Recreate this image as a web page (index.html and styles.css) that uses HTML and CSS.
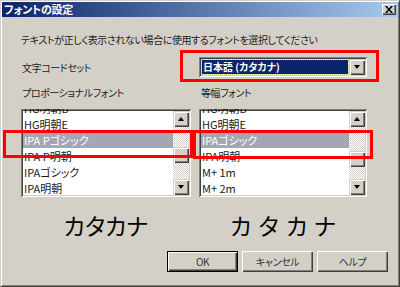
FILE: index.html
```html
<!DOCTYPE html>
<html lang="ja">

<head>
    <meta charset="UTF-8">
    <title>フォントの設定</title>
    <link rel="stylesheet" href="styles.css">
</head>

<body>
    <div class="window">
        <div class="titlebar">
            <span class="title">フォントの設定</span>
            <span class="close">
                <svg width="8" height="7" viewBox="0 0 8 7">
                    <path d="M0 0h2l2 2.5L6 0h2L5 3.5 8 7H6L4 4.5 2 7H0l3-3.5z" fill="#000" />
                </svg>
            </span>
        </div>

        <div class="content">
            <p class="intro">テキストが正しく表示されない場合に使用するフォントを選択してください</p>

            <div class="form">
                <div class="label">文字コードセット</div>
                <div class="combo">
                    <span class="combo-value"><span>日本語 (カタカナ)</span></span>
                    <span class="sb-btn"><i class="arrow down"></i></span>
                </div>

                <div class="label caption">プロポーショナルフォント</div>
                <div class="label caption right">等幅フォント</div>

                <div class="list">
                    <ul class="items">
                        <li>HG明朝B</li>
                        <li>HG明朝E</li>
                        <li class="sel">IPA Pゴシック</li>
                        <li>IPA P明朝</li>
                        <li>IPAゴシック</li>
                        <li>IPA明朝</li>
                    </ul>
                    <div class="scrollbar">
                        <span class="sb-btn"><i class="arrow up"></i></span>
                        <span class="track"><span class="thumb" style="margin-top: 20px;"></span></span>
                        <span class="sb-btn"><i class="arrow down"></i></span>
                    </div>
                </div>

                <div class="list">
                    <ul class="items">
                        <li>HG明朝B</li>
                        <li>HG明朝E</li>
                        <li class="sel">IPAゴシック</li>
                        <li>IPA明朝</li>
                        <li>M+ 1m</li>
                        <li>M+ 2m</li>
                    </ul>
                    <div class="scrollbar">
                        <span class="sb-btn"><i class="arrow up"></i></span>
                        <span class="track"><span class="thumb" style="margin-top: 24px;"></span></span>
                        <span class="sb-btn"><i class="arrow down"></i></span>
                    </div>
                </div>

                <div class="preview">カタカナ</div>
                <div class="preview mono">カタカナ</div>
            </div>

            <div class="buttons">
                <span class="btn default">OK</span>
                <span class="btn">キャンセル</span>
                <span class="btn">ヘルプ</span>
            </div>
        </div>

        <!-- 赤枠の注記 -->
        <div class="mark mark-combo"></div>
        <div class="mark mark-left"></div>
        <div class="mark mark-right"></div>
    </div>
</body>

</html>
```

FILE: styles.css
```css
body {
    margin: 0;
    font-family: "Noto Sans CJK JP", "Liberation Sans", sans-serif;
    font-size: 10px;
    letter-spacing: -0.4px;
    color: #222;
    font-feature-settings: "palt";
}

.window {
    position: relative;
    box-sizing: border-box;
    width: 400px;
    height: 287px;
    padding: 1px;

    background-color: #d4d0c8;
    border: 1px solid;
    border-color: #d4d0c8 #404040 #404040 #d4d0c8;
    box-shadow:
        inset 1px 1px #ffffff,
        inset -1px -1px #808080;
}

.titlebar {
    height: 15px;
    display: flex;
    align-items: center;
    justify-content: space-between;
    padding: 0 2px 0 2px;

    background: linear-gradient(to right, #0a246a, #a6caf0);
}

.title {
    color: #ffffff;
    font-weight: bold;
    font-size: 11px;
    letter-spacing: -0.3px;
    line-height: 15px;
}

.close {
    width: 14px;
    height: 11px;
    display: flex;
    align-items: center;
    justify-content: center;

    background-color: #d4d0c8;
    box-shadow:
        inset 1px 1px #ffffff,
        inset -1px -1px #404040,
        inset -2px -2px #808080;
}

.content {
    padding: 16px 10px 0 19px;
}

.intro {
    margin: 0;
    line-height: 13px;
}

.form {
    display: grid;
    grid-template-columns: 170px 168px;
    column-gap: 8px;
    margin-top: 11px;
}

.label {
    display: flex;
    align-items: center;
    padding-left: 1px;
    line-height: 13px;
}

.caption {
    margin-top: 9px;
}

.caption.right {
    padding-left: 2px;
}

/* コンボボックス */
.combo {
    display: flex;
    height: 20px;
    padding: 2px;
    box-sizing: border-box;

    background-color: #ffffff;
    box-shadow:
        inset 1px 1px #808080,
        inset -1px -1px #ffffff,
        inset 2px 2px #404040,
        inset -2px -2px #d4d0c8;
}

.combo-value {
    flex: 1;
    display: flex;
    padding: 1px;
}

.combo-value span {
    flex: 1;
    padding-left: 1px;
    color: #ffffff;
    font-weight: bold;
    letter-spacing: 0;
    line-height: 14px;
    background-color: #0a246a;
    outline: 1px dotted #c8c070;
    outline-offset: 0;
}

/* リストボックス */
.list {
    display: flex;
    height: 88px;
    margin-top: 10px;
    padding: 2px;
    box-sizing: border-box;
    overflow: hidden;

    background-color: #ffffff;
    box-shadow:
        inset 1px 1px #808080,
        inset -1px -1px #ffffff,
        inset 2px 2px #404040,
        inset -2px -2px #d4d0c8;
}

.items {
    flex: 1;
    margin: -11px 0 0 0;
    padding: 0;
    list-style: none;
}

.items li {
    height: 16px;
    line-height: 16px;
    padding-left: 1px;
    font-size: 11px;
    letter-spacing: 0;
    color: #1a1a1a;
    white-space: nowrap;
}

.items li.sel {
    background-color: #a3a7b4;
    color: #ffffff;
}

.scrollbar {
    width: 16px;
    display: flex;
    flex-direction: column;
}

.sb-btn {
    width: 16px;
    height: 16px;
    flex: none;
    display: flex;
    align-items: center;
    justify-content: center;
    box-sizing: border-box;

    background-color: #d4d0c8;
    box-shadow:
        inset 1px 1px #d4d0c8,
        inset 2px 2px #ffffff,
        inset -1px -1px #404040,
        inset -2px -2px #808080;
}

.track {
    flex: 1;
    display: block;
    background: repeating-conic-gradient(#ffffff 0 25%, #d4d0c8 0 50%) 0 0 / 2px 2px;
}

.thumb {
    display: block;
    height: 16px;
    background-color: #d4d0c8;
    box-shadow:
        inset 1px 1px #d4d0c8,
        inset 2px 2px #ffffff,
        inset -1px -1px #404040,
        inset -2px -2px #808080;
}

.arrow {
    width: 0;
    height: 0;
    border-left: 3.5px solid transparent;
    border-right: 3.5px solid transparent;
}

.arrow.up {
    border-bottom: 4px solid #000000;
}

.arrow.down {
    border-top: 4px solid #000000;
}

/* プレビュー */
.preview {
    margin-top: 14px;
    text-align: center;
    font-size: 23px;
    letter-spacing: 0;
    line-height: 28px;
    color: #000000;
}

.preview.mono {
    font-feature-settings: normal;
    letter-spacing: 5px;
    text-indent: 5px;
}

/* ボタン */
.buttons {
    display: flex;
    justify-content: flex-end;
    gap: 4px;
    margin-top: 12px;
}

.btn {
    width: 71px;
    height: 21px;
    display: flex;
    align-items: center;
    justify-content: center;
    box-sizing: border-box;
    color: #333333;

    background-color: #d4d0c8;
    box-shadow:
        inset 1px 1px #ffffff,
        inset -1px -1px #404040,
        inset -2px -2px #808080;
}

.btn.default {
    box-shadow:
        inset 0 0 0 1px #000000,
        inset 2px 2px #ffffff,
        inset -2px -2px #404040,
        inset -3px -3px #808080;
}

/* 赤枠 */
.mark {
    position: absolute;
    border: 3px solid #ff0000;
}

.mark-combo {
    left: 179px;
    top: 49px;
    width: 193px;
    height: 26px;
}

.mark-left {
    left: 2px;
    top: 129px;
    width: 184px;
    height: 22px;
}

.mark-right {
    left: 192px;
    top: 129px;
    width: 174px;
    height: 23px;
}
```
